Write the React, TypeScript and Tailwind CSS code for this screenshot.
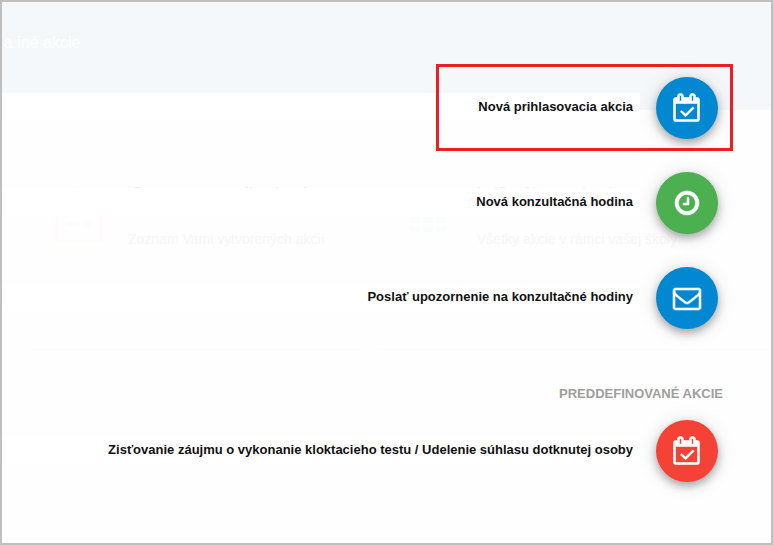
import React from 'react'

type IconName = 'calendar' | 'clock' | 'envelope'
type IconProps = { name: IconName }

const iconPaths: Record<IconName, string> = {
  calendar:
    'M1303 964l-512 512q-10 9-23 9t-23-9l-288-288q-9-10-9-23t9-22l46-46q9-9 22-9t23 9l220 220 444-444q10-9 23-9t22 9l46 46q9 9 9 22t-9 23zm-1175 700h1408v-1024h-1408v1024zm384-1216v-288q0-14-9-23t-23-9h-64q-14 0-23 9t-9 23v288q0 14 9 23t23 9h64q14 0 23-9t9-23zm768 0v-288q0-14-9-23t-23-9h-64q-14 0-23 9t-9 23v288q0 14 9 23t23 9h64q14 0 23-9t9-23zm384-64v1280q0 52-38 90t-90 38h-1408q-52 0-90-38t-38-90v-1280q0-52 38-90t90-38h128v-96q0-66 47-113t113-47h64q66 0 113 47t47 113v96h384v-96q0-66 47-113t113-47h64q66 0 113 47t47 113v96h128q52 0 90 38t38 90z',
  clock:
    'M1024 544v448q0 14-9 23t-23 9h-320q-14 0-23-9t-9-23v-64q0-14 9-23t23-9h224v-352q0-14 9-23t23-9h64q14 0 23 9t9 23zm416 352q0-148-73-273t-198-198-273-73-273 73-198 198-73 273 73 273 198 198 273 73 273-73 198-198 73-273zm224 0q0 209-103 385.500t-279.500 279.500-385.500 103-385.500-103-279.500-279.500-103-385.500 103-385.500 279.500-279.500 385.500-103 385.500 103 279.500 279.500 103 385.500z',
  envelope:
    'M1664 1504v-768q-32 36-69 66-268 206-426 338-51 43-83 67t-86.500 48.500-102.500 24.500h-2q-48 0-102.500-24.500t-86.500-48.500-83-67q-158-132-426-338-37-30-69-66v768q0 13 9.500 22.500t22.500 9.500h1472q13 0 22.500-9.500t9.500-22.500zm0-1051v-24.500l-.5-13-3-12.500-5.500-9-9-7.500-14-2.500h-1472q-13 0-22.500 9.500t-9.500 22.500q0 168 147 284 193 152 401 317 6 5 35 29.500t46 37.500 44.500 31.500 50.500 27.500 43 9h2q20 0 43-9t50.500-27.500 44.500-31.500 46-37.500 35-29.500q208-165 401-317 54-43 100.500-115.500t46.500-131.500zm128-37v1088q0 66-47 113t-113 47h-1472q-66 0-113-47t-47-113v-1088q0-66 47-113t113-47h1472q66 0 113 47t47 113z',
}

const iconBoxes: Record<IconName, string> = {
  calendar: '-32 32 1792 1792',
  clock: '0 0 1792 1792',
  envelope: '0 0 1792 1792',
}

const Icon: React.FC<IconProps> = ({ name }) => (
  <svg
    className="h-7 w-7 overflow-visible"
    viewBox={iconBoxes[name]}
    fill="currentColor"
    stroke="currentColor"
    strokeWidth="36"
    aria-hidden="true"
  >
    <path d={iconPaths[name]} />
  </svg>
)

interface ActionProps {
  label: string
  icon: IconName
  color: string
}

const Action: React.FC<ActionProps> = ({ label, icon, color }) => (
  <button type="button" className="flex w-full cursor-pointer items-center gap-4 pr-[53px] text-right">
    <span className="mb-0.5 flex-1 bg-white pr-[7px] text-[13px] leading-7 font-bold text-[#111]">{label}</span>
    <span
      className={`flex h-[62px] w-[62px] shrink-0 items-center justify-center rounded-full text-white shadow-[0_4px_8px_rgba(0,0,0,0.3),0_2px_20px_rgba(0,0,0,0.12)] ${color}`}
    >
      <Icon name={icon} />
    </span>
  </button>
)

const App: React.FC = () => {
  return (
    <div className="relative min-h-screen overflow-hidden border-2 border-[#bfbfbf] bg-[#fefefe] font-['Liberation_Sans',Arial,sans-serif]">
      {/* Faded page under the menu */}
      <div className="absolute inset-0">
        <div className="h-[108px] bg-[#f4f8fb] pt-7 pl-0.5 text-base leading-[26px] text-white">a iné akcie</div>
        <div className="ml-[29px] grid grid-cols-[328px_1fr] gap-[21px] text-sm text-[#f7f7f7]">
          <section className="flex h-[240px] gap-[25px] border-b border-[#fbfbfb] pt-[76px] pl-6">
            <svg className="h-[58px] w-12" viewBox="0 0 48 58" fill="none" stroke="#fdfcf9" strokeWidth="3" aria-hidden="true">
              <path d="M2 6h14l7-4 7 4h16v49H2zM12 38h12m6-3 5 6m0-6-5 6" />
            </svg>
            <div>
              <svg className="h-[3px] w-[180px]" viewBox="0 0 180 3" fill="#eeeeee" aria-hidden="true">
                <path d="M4 3q5-4 11 0zM117 1h3v2h-3zM122 1h2v2h-2zM148 1h2v2h-2zM176 1h2v2h-2z" />
              </svg>
              <p className="pt-10 leading-5">Zoznam Vami vytvorených akcií</p>
            </div>
          </section>
          <section className="flex h-[240px] gap-[25px] border-b border-[#fbfbfb] pt-[76px] pl-6">
            <svg className="h-[58px] w-12" viewBox="0 0 48 58" fill="#fafcfd" aria-hidden="true">
              <path d="M6 31h10v6H6zm13 0h10v6H19zm13 0h10v6H32zM6 40h10v6H6zm13 0h10v6H19zm13 0h10v6H32z" />
            </svg>
            <div>
              <svg className="h-[3px] w-[180px]" viewBox="0 0 180 3" fill="#f2f2f2" aria-hidden="true">
                <path d="M1 1h2v2H1zM18 1h2v2h-2zM23 1h5v2h-5zM49 1h3v2h-3zM56 1h2v2h-2zM106 1h2v2h-2zM132 1h2v2h-2z" />
              </svg>
              <p className="pt-10 leading-5">Všetky akcie v rámci vašej školy</p>
            </div>
          </section>
        </div>
      </div>

      <nav className="relative flex flex-col gap-[33px] pt-[75px]" aria-label="Akcie">
        <Action label="Nová prihlasovacia akcia" icon="calendar" color="bg-[#0288d1]" />
        <Action label="Nová konzultačná hodina" icon="clock" color="bg-[#4caf50]" />
        <Action label="Poslať upozornenie na konzultačné hodiny" icon="envelope" color="bg-[#0288d1]" />
        <div className="flex flex-col gap-4 pt-[22px]">
          <h2 className="pr-12 text-right text-[13px] leading-5 font-bold text-[#9e9e9e]">PREDDEFINOVANÉ AKCIE</h2>
          <Action
            label="Zisťovanie záujmu o vykonanie kloktacieho testu / Udelenie súhlasu dotknutej osoby"
            icon="calendar"
            color="bg-[#f44336]"
          />
        </div>
        {/* Highlight over the first action */}
        <div className="pointer-events-none absolute top-[62px] right-[38px] h-[87px] w-[297px] border-3 border-[#ee1c25]" />
      </nav>
    </div>
  )
}

export default App
